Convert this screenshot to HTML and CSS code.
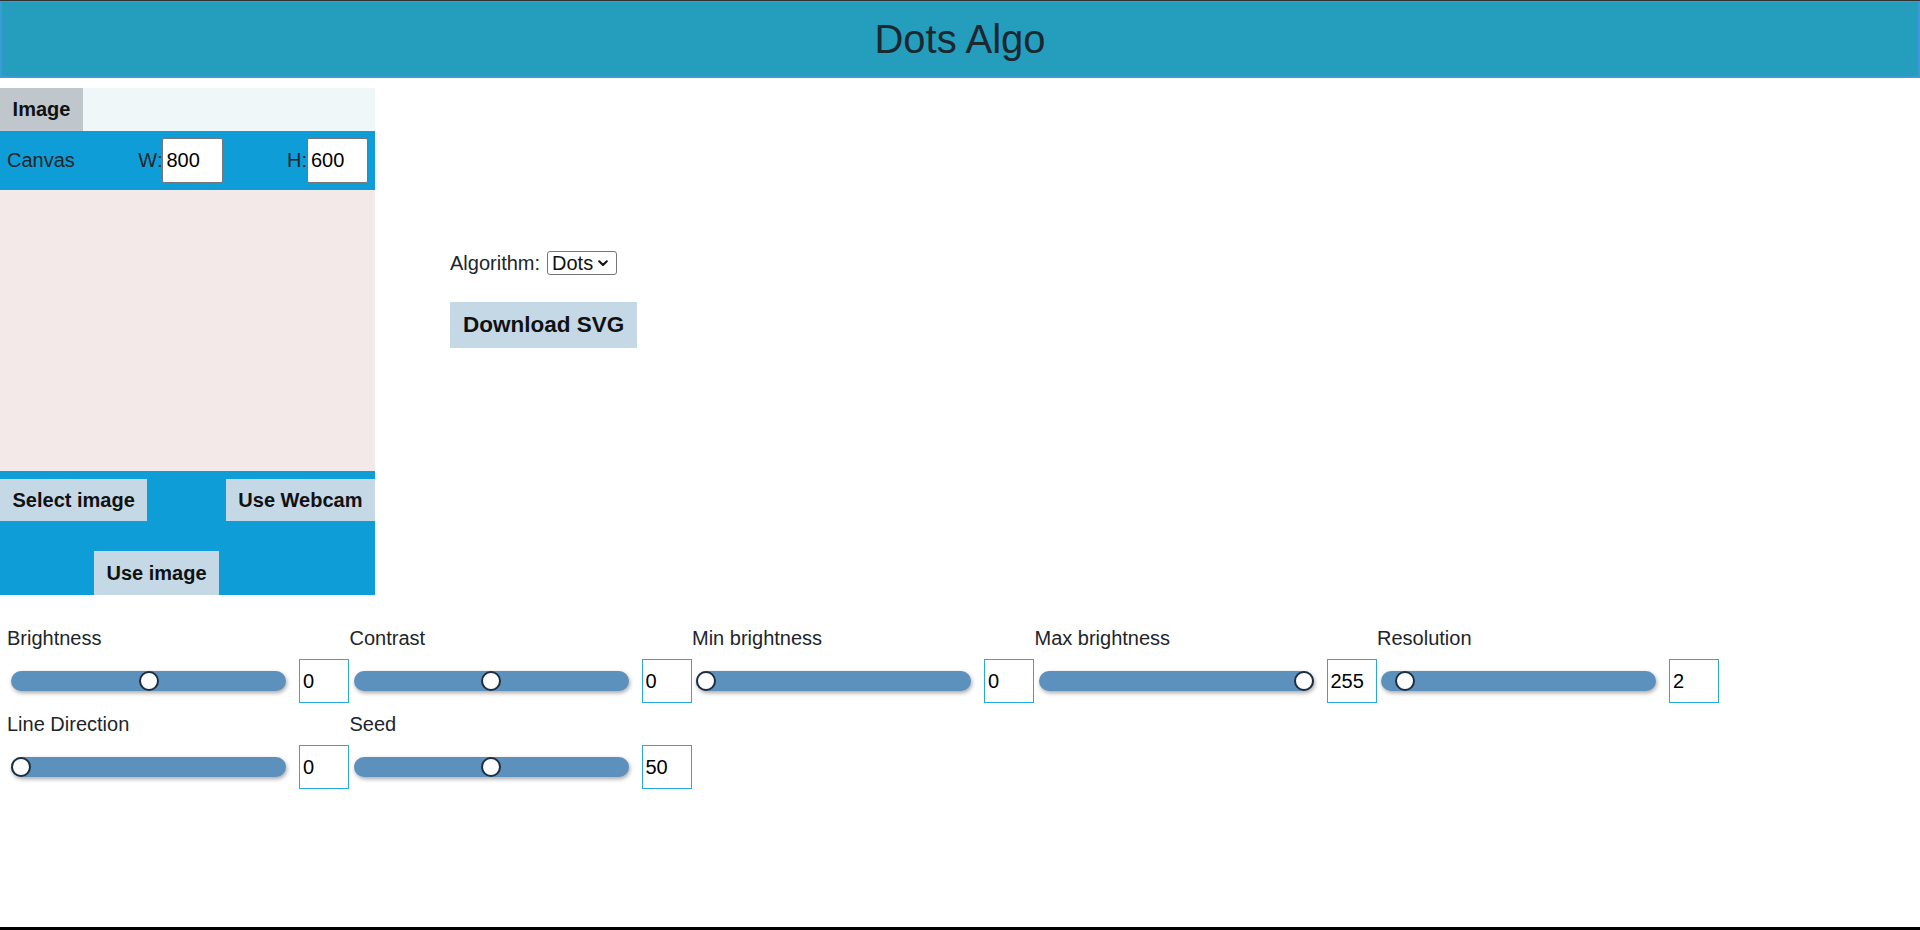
FILE: index.html
```html
<!DOCTYPE html>
<html lang="en">
<head>
<meta charset="utf-8">
<title>Dots Algo</title>
<link rel="stylesheet" href="styles.css">
</head>
<body>
<div class="app">
  <header class="topbar"><h1>Dots Algo</h1></header>

  <main class="workspace">
    <section class="image-panel">
      <div class="tabs"><span class="tab active">Image</span></div>
      <div class="canvas-row">
        <span class="canvas-label">Canvas</span>
        <label class="dim">W:<input class="dim-input" type="text" value="800"></label>
        <label class="dim">H:<input class="dim-input" type="text" value="600"></label>
      </div>
      <canvas class="preview" width="800" height="600"></canvas>
      <div class="image-actions">
        <div class="action-row">
          <button class="btn">Select image</button>
          <button class="btn">Use Webcam</button>
        </div>
        <div class="action-row second">
          <button class="btn tall">Use image</button>
        </div>
      </div>
    </section>

    <section class="settings">
      <div class="algo-row">
        <span>Algorithm:</span>
        <span class="select-wrap">
          <select class="algo-select"><option>Dots</option></select>
          <svg class="chev" width="10" height="7" viewBox="0 0 10 7"><polyline points="1.2,1.2 5,5 8.8,1.2" fill="none" stroke="#111" stroke-width="2" stroke-linecap="round" stroke-linejoin="round"/></svg>
        </span>
      </div>
      <button class="btn big">Download SVG</button>
    </section>
  </main>

  <section class="controls">
    <div class="control">
      <label class="control-label">Brightness</label>
      <div class="control-row"><input type="range" min="-100" max="100" value="0"><input class="num" type="number" value="0"></div>
    </div>
    <div class="control">
      <label class="control-label">Contrast</label>
      <div class="control-row"><input type="range" min="-100" max="100" value="0"><input class="num" type="number" value="0"></div>
    </div>
    <div class="control">
      <label class="control-label">Min brightness</label>
      <div class="control-row"><input type="range" min="0" max="255" value="0"><input class="num" type="number" value="0"></div>
    </div>
    <div class="control">
      <label class="control-label">Max brightness</label>
      <div class="control-row"><input type="range" min="0" max="255" value="255"><input class="num" type="number" value="255"></div>
    </div>
    <div class="control">
      <label class="control-label">Resolution</label>
      <div class="control-row"><input type="range" min="1" max="19" value="2"><input class="num" type="number" value="2"></div>
    </div>
    <div class="control">
      <label class="control-label">Line Direction</label>
      <div class="control-row"><input type="range" min="0" max="360" value="0"><input class="num" type="number" value="0"></div>
    </div>
    <div class="control">
      <label class="control-label">Seed</label>
      <div class="control-row"><input type="range" min="0" max="100" value="50"><input class="num" type="number" value="50"></div>
    </div>
  </section>
</div>
</body>
</html>
```
FILE: styles.css
```css
* { box-sizing: border-box; }
html, body { margin: 0; padding: 0; }
body {
  font-family: "Liberation Sans", Arial, sans-serif;
  font-size: 20px;
  color: #212529;
  background: #fff;
}
.app {
  min-height: 930px;
  border-top: 1px solid #333;
  border-bottom: 3px solid #000;
  display: flex;
  flex-direction: column;
}

/* header */
.topbar {
  height: 77px;
  background: #259dbc;
  border: 2px solid #3d9ad9;
  border-top-width: 1px;
  display: flex;
  align-items: center;
  justify-content: center;
}
.topbar h1 {
  margin: 0;
  font-size: 40px;
  font-weight: 400;
  line-height: 1;
  color: #1b2830;
}

/* workspace */
.workspace {
  display: flex;
  margin-top: 10px;
}
.image-panel {
  width: 375px;
  flex: none;
}
.tabs {
  height: 43px;
  background: #f0f7f9;
  display: flex;
}
.tab {
  width: 83px;
  line-height: 43px;
  text-align: center;
  font-weight: 700;
  color: #111;
}
.tab.active { background: #c0c7cc; }

.canvas-row {
  height: 59px;
  background: #0f9dd8;
  display: flex;
  align-items: center;
  justify-content: space-between;
  padding: 0 7px;
}
.dim { display: flex; align-items: center; }
.dim-input {
  width: 61px;
  height: 45px;
  border: 1px solid #767676;
  border-radius: 2px;
  padding: 0 3px;
  font: 20px "Liberation Sans", Arial, sans-serif;
  color: #000;
  background: #fff;
  outline: none;
}
.preview {
  display: block;
  width: 375px;
  height: 281px;
  background: #f3e9e8;
}
.image-actions {
  height: 124px;
  background: #0f9dd8;
  padding-top: 8px;
}
.action-row {
  display: flex;
  justify-content: space-between;
}
.action-row.second {
  margin-top: 30px;
  padding-left: 94px;
  justify-content: flex-start;
}
.btn {
  height: 42px;
  padding: 0 12.5px;
  border: none;
  background: #c4d8e5;
  font: 700 20px "Liberation Sans", Arial, sans-serif;
  color: #111;
  cursor: pointer;
}
.btn.tall { height: 44px; }

/* settings */
.settings {
  padding-left: 75px;
  padding-top: 163px;
  display: flex;
  flex-direction: column;
  align-items: flex-start;
}
.algo-row {
  display: flex;
  align-items: center;
  gap: 7px;
  height: 24px;
}
.select-wrap { position: relative; display: inline-block; }
.algo-select {
  -webkit-appearance: none;
  appearance: none;
  width: 70px;
  height: 24px;
  border: 1px solid #767676;
  border-radius: 3px;
  padding: 0 0 0 4px;
  background: #fff;
  font: 20px "Liberation Sans", Arial, sans-serif;
  color: #111;
  display: block;
}
.chev {
  position: absolute;
  right: 9px;
  top: 9px;
  pointer-events: none;
}
.btn.big {
  margin-top: 27px;
  height: 46px;
  padding: 0 13px;
  font-size: 22.5px;
}

/* controls */
.controls {
  display: flex;
  flex-wrap: wrap;
  margin-top: 32px;
  width: 1920px;
}
.control {
  width: 342.5px;
  flex: none;
  padding-bottom: 10px;
}
.control-label {
  display: block;
  padding-left: 7px;
  line-height: 23px;
  height: 23px;
}
.control-row {
  display: flex;
  align-items: center;
  margin-top: 9px;
  height: 44px;
}
input[type=range] {
  -webkit-appearance: none;
  appearance: none;
  flex: none;
  width: 275px;
  height: 20px;
  margin: 0 0 0 11px;
  background: transparent;
  outline: none;
}
input[type=range]::-webkit-slider-runnable-track {
  height: 20px;
  border-radius: 10px;
  background: #5d91bd;
  box-shadow: 1px 2px 4px rgba(0, 0, 0, 0.35);
}
input[type=range]::-webkit-slider-thumb {
  -webkit-appearance: none;
  appearance: none;
  width: 20px;
  height: 20px;
  border-radius: 50%;
  background: #fff;
  border: 2px solid #1f2e3f;
}
.num {
  flex: none;
  width: 50px;
  height: 44px;
  margin-left: 13px;
  border: 1px solid #29a8e0;
  padding: 0 3px;
  font: 20px "Liberation Sans", Arial, sans-serif;
  color: #000;
  background: #fff;
  outline: none;
  -moz-appearance: textfield;
  appearance: textfield;
}
.num::-webkit-inner-spin-button,
.num::-webkit-outer-spin-button {
  -webkit-appearance: none;
  margin: 0;
}
```
